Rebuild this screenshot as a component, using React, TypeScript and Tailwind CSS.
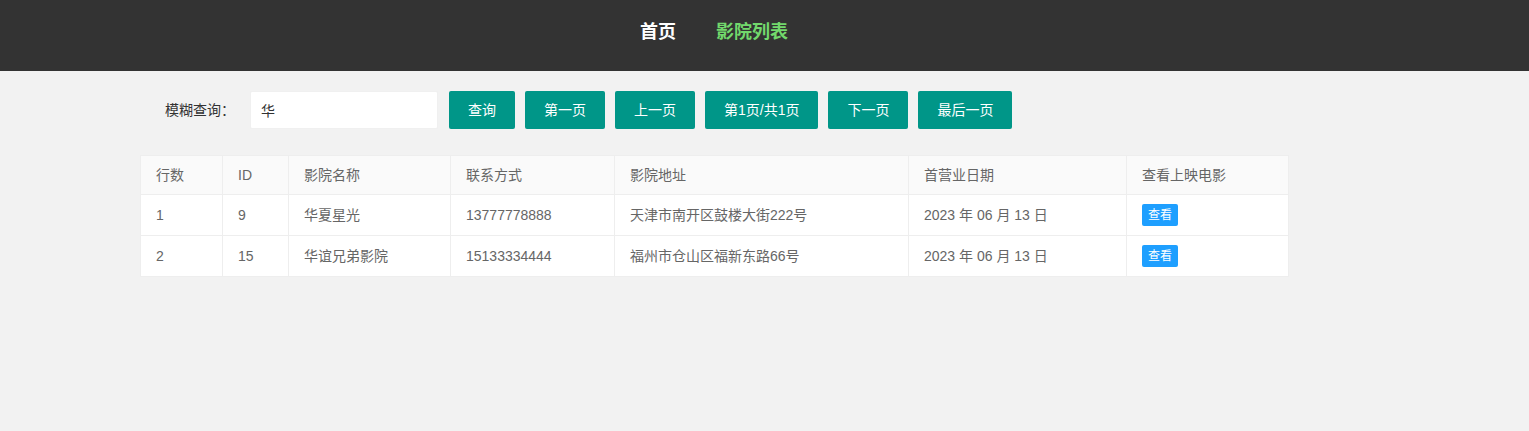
const cinemas = [
  { no: 1, id: 9, name: "华夏星光", phone: "13777778888", addr: "天津市南开区鼓楼大街222号", date: "2023 年 06 月 13 日" },
  { no: 2, id: 15, name: "华谊兄弟影院", phone: "15133334444", addr: "福州市仓山区福新东路66号", date: "2023 年 06 月 13 日" },
];

const pageBtns = ["第一页", "上一页", "第1页/共1页", "下一页", "最后一页"];

const App = () => {
  return (
    <div
      className="min-h-[431px] bg-[#f2f2f2] text-[14px] text-[#333]"
      style={{ fontFamily: '"Liberation Sans", "Noto Sans CJK SC", sans-serif' }}
    >
      <div className="h-[71px] bg-[#333333] flex items-start pl-[640px] pt-[20px] gap-10">
        <a className="text-[18px] leading-[24px] font-bold text-white">首页</a>
        <a className="text-[18px] leading-[24px] font-bold text-[#72d86c]">影院列表</a>
      </div>

      <div className="flex items-center pl-[140px] mt-[20px] h-[38px]">
        <label className="w-[110px] px-[15px] text-right">模糊查询：</label>
        <input
          className="w-[188px] h-[38px] bg-white border border-[#f0f0f0] rounded-[2px] pl-[10px] outline-none text-[#333]"
          defaultValue="华"
        />
        <button className="ml-[11px] h-[38px] px-[18px] border border-transparent bg-[#009688] text-white rounded-[2px]">查询</button>
        {pageBtns.map((b) => (
          <button
            key={b}
            className="ml-[10px] h-[38px] px-[18px] border border-transparent bg-[#009688] text-white rounded-[2px] whitespace-nowrap"
          >
            {b}
          </button>
        ))}
      </div>

      <div className="pl-[140px] mt-[26px]">
        <table className="w-[1148px] table-fixed border-collapse bg-white text-[#666]">
          <colgroup>
            <col className="w-[82px]" />
            <col className="w-[66px]" />
            <col className="w-[162px]" />
            <col className="w-[164px]" />
            <col className="w-[294px]" />
            <col className="w-[218px]" />
            <col className="w-[162px]" />
          </colgroup>
          <thead>
            <tr className="bg-[#fafafa] h-[39px]">
              {["行数", "ID", "影院名称", "联系方式", "影院地址", "首营业日期", "查看上映电影"].map((h) => (
                <th key={h} className="border border-[#eeeeee] px-[15px] text-left font-normal">
                  {h}
                </th>
              ))}
            </tr>
          </thead>
          <tbody>
            {cinemas.map((c) => (
              <tr key={c.id} className="h-[41px]">
                <td className="border border-[#eeeeee] px-[15px]">{c.no}</td>
                <td className="border border-[#eeeeee] px-[15px]">{c.id}</td>
                <td className="border border-[#eeeeee] px-[15px]">{c.name}</td>
                <td className="border border-[#eeeeee] px-[15px]">{c.phone}</td>
                <td className="border border-[#eeeeee] px-[15px]">{c.addr}</td>
                <td className="border border-[#eeeeee] px-[15px]">{c.date}</td>
                <td className="border border-[#eeeeee] px-[15px]">
                  <button className="h-[22px] px-[6px] bg-[#1e9fff] text-white text-[12px] rounded-[2px] leading-[22px]">
                    查看
                  </button>
                </td>
              </tr>
            ))}
          </tbody>
        </table>
      </div>
    </div>
  );
};

export default App;
